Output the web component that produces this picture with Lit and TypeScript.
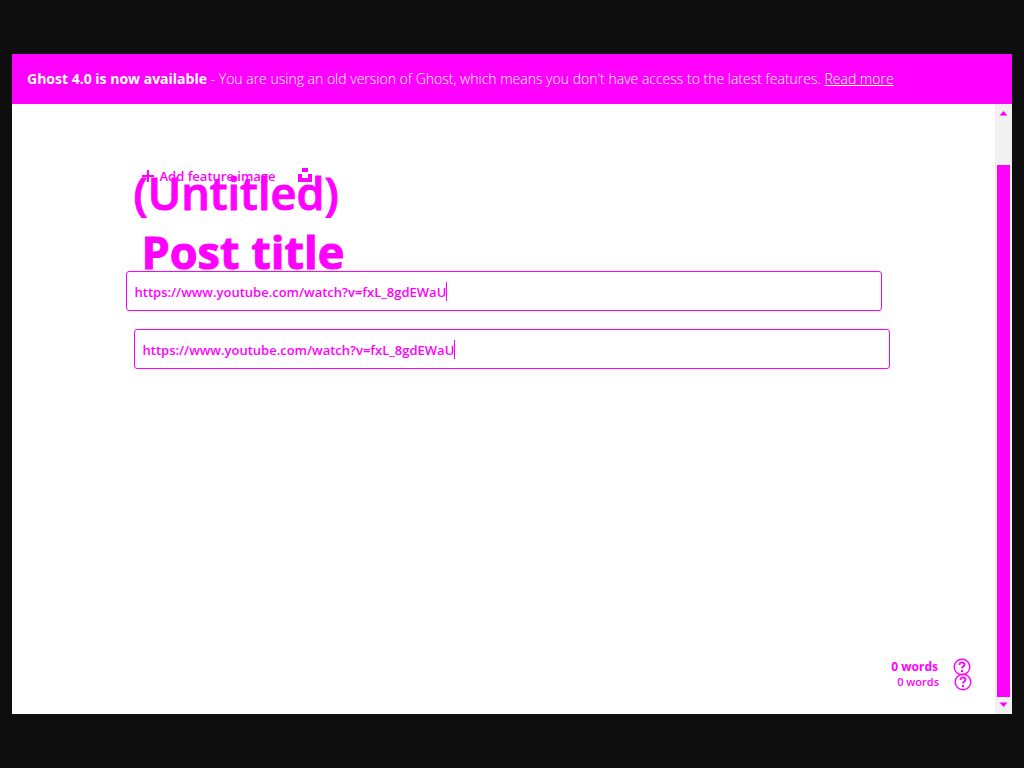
import { LitElement, html, css } from "lit";
import { customElement, property } from "lit/decorators.js";

const MAGENTA = css`#ff00ff`;
const VIDEO_URL = "https://www.youtube.com/watch?v=fxL_8gdEWaU";

@customElement("url-field")
class UrlField extends LitElement {
  @property() value = "";
  @property() label = "";

  static styles = css`
    :host { display: block; }
    .field {
      display: flex;
      align-items: center;
      box-sizing: border-box;
      height: 40px;
      padding: 0 8px;
      border: 1px solid ${MAGENTA};
      border-radius: 3px;
    }
    .input {
      field-sizing: content;
      min-width: 0;
      padding: 2px 0 0;
      border: 0;
      outline: 0;
      background: transparent;
      color: ${MAGENTA};
      font: 600 13px/20px "Open Sans", "Noto Sans", sans-serif;
    }
    .caret { width: 1px; height: 19px; background: ${MAGENTA}; }
  `;

  render() {
    return html`<div class="field">
      <input class="input" type="text" aria-label=${this.label} .value=${this.value} /><span class="caret"></span>
    </div>`;
  }
}

@customElement("word-count")
class WordCount extends LitElement {
  static styles = css`
    :host { display: flex; align-items: center; gap: 15px; color: ${MAGENTA}; }
    .help { display: flex; color: inherit; }
    .icon { width: 18px; height: 18px; fill: none; stroke: currentColor; }
  `;

  render() {
    return html`<span>0 words</span>
      <a class="help" href="#" aria-label="Help">
        <svg class="icon" viewBox="0 0 18 18">
          <circle cx="9" cy="9" r="7.8" stroke-width="1.4" />
          <path d="M6.5 7V6.3Q6.8 4.4 9 4.4T11.6 6.7Q11.6 7.8 10.1 8.6Q9 9.2 9 10.6" stroke-width="1.8" />
          <path d="M9 12v2" stroke-width="2" />
        </svg>
      </a>`;
  }
}

@customElement("app-root")
class AppRoot extends LitElement {
  static styles = css`
    :host {
      display: flex;
      flex-direction: column;
      box-sizing: border-box;
      min-height: 100vh;
      padding: 54px 12px;
      background: #0e0e0e;
      color: ${MAGENTA};
      font: 14px/20px "Open Sans", "Noto Sans", sans-serif;
    }
    .banner {
      box-sizing: border-box;
      min-height: 50px;
      padding: 15px;
      background: ${MAGENTA};
      color: #fff;
      font-size: 14px;
      font-weight: 300;
    }
    .strong { font-weight: 700; }
    .more { color: inherit; }
    .body { display: flex; flex: 1; background: #fff; }
    .editor { display: grid; flex: 1; }
    .layer {
      grid-area: 1 / 1;
      display: flex;
      flex-direction: column;
      box-sizing: border-box;
      width: 100%;
      max-width: 756px;
      margin: 0 auto;
    }
    .published { padding-top: 60px; }
    .draft { padding-top: 62px; position: relative; left: 8px; }
    .title {
      margin: 0;
      padding-left: 8px;
      font-size: 45px;
      line-height: 58px;
      font-weight: 700;
      -webkit-text-stroke: 1px ${MAGENTA};
    }
    .published .title { font-weight: 600; margin-bottom: 49px; }
    .draft .title { margin-bottom: 48px; }
    .feature { display: flex; align-items: center; gap: 22px; height: 20px; padding-left: 8px; margin-bottom: 37px; }
    .add {
      display: flex;
      align-items: center;
      gap: 6px;
      padding: 0;
      border: 0;
      background: none;
      color: inherit;
      font: 600 13px/20px "Open Sans", "Noto Sans", sans-serif;
    }
    .plus { width: 12px; height: 12px; fill: none; stroke: currentColor; stroke-width: 2; }
    .unsplash { width: 14px; height: 16px; fill: currentColor; }
    .status {
      grid-area: 1 / 1;
      align-self: end;
      justify-self: end;
      display: flex;
      flex-direction: column;
      padding: 0 23px 25px 0;
    }
    .count { height: 15px; justify-content: flex-end; font-size: 11px; font-weight: 600; }
    .large { font-size: 12px; font-weight: 700; margin-right: 1px; }
    .scroll {
      display: flex;
      flex-direction: column;
      box-sizing: border-box;
      width: 17px;
      padding: 0 2px;
      background: #f1f1f1;
    }
    .arrow { width: 13px; height: 17px; fill: currentColor; }
    .track { flex: 1; display: flex; padding-top: 44px; }
    .thumb { flex: 1; background: ${MAGENTA}; }
  `;

  render() {
    return html`
      <header class="banner">
        <span class="strong">Ghost 4.0 is now available</span> - You are using an old version of Ghost, which means you don't have access to the latest features. <a class="more" href="#">Read more</a>
      </header>
      <div class="body">
        <main class="editor">
          <section class="layer published">
            <h1 class="title">(Untitled)</h1>
            <url-field label="Post link" .value=${VIDEO_URL}></url-field>
          </section>
          <section class="layer draft">
            <div class="feature">
              <button class="add">
                <svg class="plus" viewBox="0 0 12 12"><path d="M6 0v12M0 6h12" /></svg>Add feature image
              </button>
              <svg class="unsplash" viewBox="0 0 14 16"><path d="M4 0h6v4H4zM0 6h4v4h6V6h4v8H0z" /></svg>
            </div>
            <h2 class="title">Post title</h2>
            <url-field label="Draft link" .value=${VIDEO_URL}></url-field>
          </section>
          <footer class="status">
            <word-count class="count large"></word-count>
            <word-count class="count"></word-count>
          </footer>
        </main>
        <div class="scroll">
          <svg class="arrow" viewBox="0 0 13 17"><path d="M2.5 11.5L6.5 7L10.5 11.5z" /></svg>
          <div class="track"><div class="thumb"></div></div>
          <svg class="arrow" viewBox="0 0 13 17"><path d="M2.5 5.5L6.5 10L10.5 5.5z" /></svg>
        </div>
      </div>
    `;
  }
}
